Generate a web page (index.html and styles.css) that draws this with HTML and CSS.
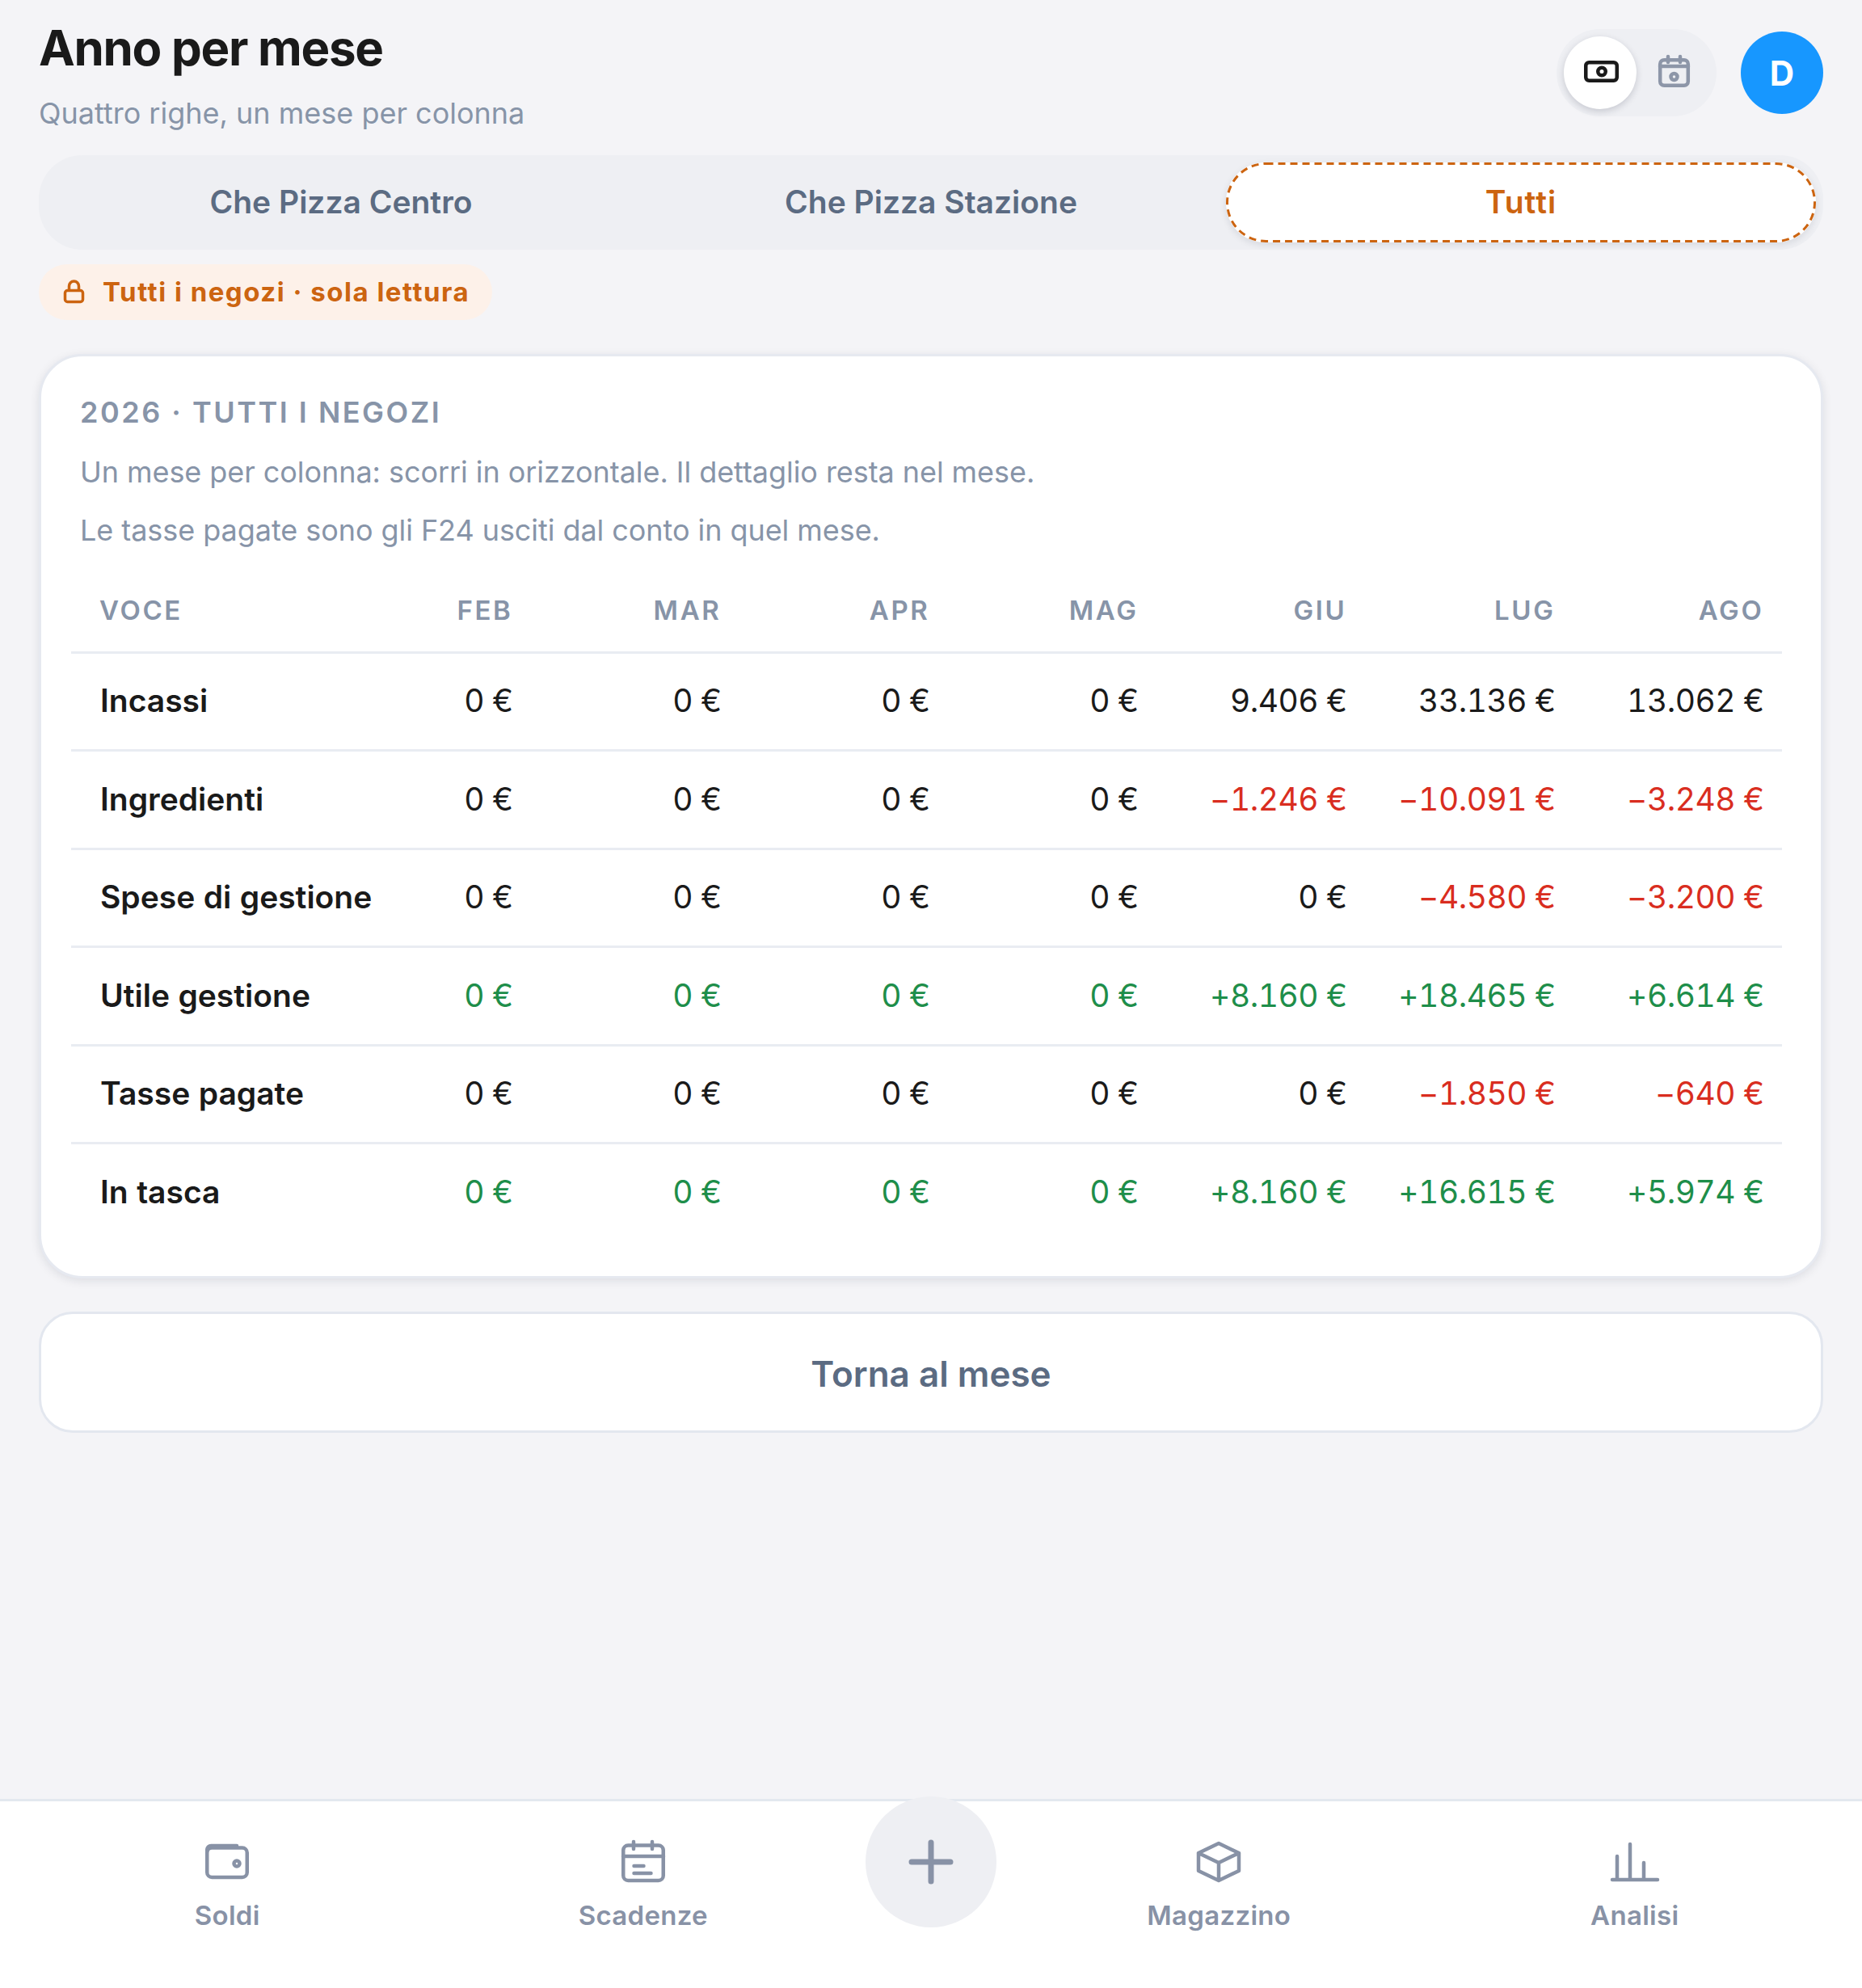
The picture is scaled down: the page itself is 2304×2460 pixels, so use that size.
FILE: index.html
```html
<!DOCTYPE html>
<html lang="it">
<head>
  <meta charset="UTF-8">
  <meta name="viewport" content="width=device-width, initial-scale=1.0">
  <title>Anno per mese</title>
  <link rel="stylesheet" href="styles.css">
</head>
<body>
  <div class="page">
    <main class="main">
      <header class="top">
        <div class="top-text">
          <h1 class="title">Anno per mese</h1>
          <p class="subtitle">Quattro righe, un mese per colonna</p>
        </div>
        <div class="top-right">
          <div class="toggle">
            <div class="toggle-btn active">
              <svg class="icon-top" viewBox="0 0 60 60" fill="none" stroke="currentColor" stroke-width="4.500">
                <rect x="12.250" y="17.250" width="38.500" height="22.500" rx="4"/>
                <circle cx="32" cy="28.500" r="4.750"/>
              </svg>
            </div>
            <div class="toggle-btn">
              <svg class="icon-top" viewBox="0 0 60 60" fill="none" stroke="currentColor" stroke-width="4.500" stroke-linecap="round">
                <rect x="14.200" y="14.200" width="34.600" height="31.600" rx="5"/>
                <path d="M24 10v7M39 10v7M14 22h35"/>
                <circle cx="31.500" cy="35" r="4"/>
              </svg>
            </div>
          </div>
          <div class="avatar">D</div>
        </div>
      </header>

      <nav class="tabs">
        <div class="tab">Che Pizza Centro</div>
        <div class="tab">Che Pizza Stazione</div>
        <div class="tab selected">
          <svg class="tab-dash" viewBox="0 0 730 99" fill="none">
            <rect x="1.500" y="1.500" width="727" height="96" rx="48" stroke="currentColor" stroke-width="3" stroke-dasharray="9 6"/>
          </svg>
          Tutti
        </div>
      </nav>

      <div class="badge">
        <svg class="icon-lock" viewBox="0 0 42 42" fill="none" stroke="currentColor" stroke-width="3.500" stroke-linecap="round">
          <rect x="10.500" y="19.500" width="22" height="14" rx="3"/>
          <path d="M15.500 19v-5a6 6 0 0 1 12 0v5"/>
        </svg>
        Tutti i negozi · sola lettura
      </div>

      <section class="card">
        <h2 class="card-title">2026 · TUTTI I NEGOZI</h2>
        <p class="card-note">Un mese per colonna: scorri in orizzontale. Il dettaglio resta nel mese.</p>
        <p class="card-note second">Le tasse pagate sono gli F24 usciti dal conto in quel mese.</p>

        <table class="year">
          <colgroup>
            <col class="col-name">
            <col class="col-first">
            <col class="col-month">
            <col class="col-month">
            <col class="col-month">
            <col class="col-month">
            <col class="col-month">
            <col class="col-month">
          </colgroup>
          <thead>
            <tr>
              <th>VOCE</th><th>FEB</th><th>MAR</th><th>APR</th><th>MAG</th><th>GIU</th><th>LUG</th><th>AGO</th>
            </tr>
          </thead>
          <tbody>
            <tr>
              <td>Incassi</td><td>0 €</td><td>0 €</td><td>0 €</td><td>0 €</td><td>9.406 €</td><td>33.136 €</td><td>13.062 €</td>
            </tr>
            <tr>
              <td>Ingredienti</td><td>0 €</td><td>0 €</td><td>0 €</td><td>0 €</td><td class="neg">−1.246 €</td><td class="neg">−10.091 €</td><td class="neg">−3.248 €</td>
            </tr>
            <tr>
              <td>Spese di gestione</td><td>0 €</td><td>0 €</td><td>0 €</td><td>0 €</td><td>0 €</td><td class="neg">−4.580 €</td><td class="neg">−3.200 €</td>
            </tr>
            <tr>
              <td>Utile gestione</td><td class="pos">0 €</td><td class="pos">0 €</td><td class="pos">0 €</td><td class="pos">0 €</td><td class="pos">+8.160 €</td><td class="pos">+18.465 €</td><td class="pos">+6.614 €</td>
            </tr>
            <tr>
              <td>Tasse pagate</td><td>0 €</td><td>0 €</td><td>0 €</td><td>0 €</td><td>0 €</td><td class="neg">−1.850 €</td><td class="neg">−640 €</td>
            </tr>
            <tr>
              <td>In tasca</td><td class="pos">0 €</td><td class="pos">0 €</td><td class="pos">0 €</td><td class="pos">0 €</td><td class="pos">+8.160 €</td><td class="pos">+16.615 €</td><td class="pos">+5.974 €</td>
            </tr>
          </tbody>
        </table>
      </section>

      <button class="back">Torna al mese</button>
    </main>

    <footer class="bottom">
      <div class="bottom-item">
        <svg class="icon-nav" viewBox="0 0 72 72" fill="none" stroke="currentColor" stroke-width="4.500" stroke-linecap="round" stroke-linejoin="round">
          <rect x="11.250" y="18.500" width="49.500" height="36.500" rx="6"/>
          <path d="M11.250 23v-2a5 5 0 0 1 5-5H48"/>
          <circle cx="48" cy="38" r="3.500"/>
        </svg>
        <span>Soldi</span>
      </div>
      <div class="bottom-item">
        <svg class="icon-nav" viewBox="0 0 72 72" fill="none" stroke="currentColor" stroke-width="4.500" stroke-linecap="round" stroke-linejoin="round">
          <rect x="11.250" y="15.500" width="49.500" height="43.500" rx="6"/>
          <path d="M24 11v9M47 11v9M11 29h50M24.500 41h12M24.500 50h21"/>
        </svg>
        <span>Scadenze</span>
      </div>
      <div class="bottom-add">
        <svg class="icon-nav" viewBox="0 0 72 72" fill="none" stroke="currentColor" stroke-width="7" stroke-linecap="round">
          <path d="M36 12v48M12 36h48"/>
        </svg>
      </div>
      <div class="bottom-item">
        <svg class="icon-nav" viewBox="0 0 72 72" fill="none" stroke="currentColor" stroke-width="4.500" stroke-linecap="round" stroke-linejoin="round">
          <path d="M36 13 61 25v22L36 59 11 47V25ZM11 25l25 12 25-12M36 37v22"/>
        </svg>
        <span>Magazzino</span>
      </div>
      <div class="bottom-item">
        <svg class="icon-nav" viewBox="0 0 72 72" fill="none" stroke="currentColor" stroke-width="4.500" stroke-linecap="round" stroke-linejoin="round">
          <path d="M8 58h56M14 58V29M30 58V14M47 58V37"/>
        </svg>
        <span>Analisi</span>
      </div>
    </footer>
  </div>
</body>
</html>
```

FILE: styles.css
```css
* {
  box-sizing: border-box;
}

body {
  margin: 0;
  background-color: #f4f4f7;
  color: #1a1a1a;
  font-family: Inter, "Noto Sans", sans-serif;
}

.page {
  display: flex;
  flex-direction: column;
  height: 2460px;
}

.main {
  flex: 1;
  padding: 23px 48px 0;
}

/* header */
.top {
  display: flex;
  justify-content: space-between;
  align-items: flex-start;
}

.title {
  margin: 0;
  font-size: 60px;
  line-height: 72px;
  font-weight: 700;
  letter-spacing: -1.3px;
}

.subtitle {
  margin: 20px 0 0;
  font-size: 36px;
  line-height: 51px;
  color: #8794a8;
}

.top-right {
  display: flex;
  align-items: center;
  gap: 30px;
  margin-top: 13px;
}

.toggle {
  display: flex;
  width: 198px;
  height: 108px;
  padding: 9px;
  border-radius: 54px;
  background-color: #eeeff3;
}

.toggle-btn {
  display: flex;
  justify-content: center;
  align-items: center;
  width: 90px;
  height: 90px;
  border-radius: 50%;
  color: #8d96a8;
}

.toggle-btn.active {
  background-color: #fff;
  color: #1a1a1a;
  box-shadow: 0 3px 9px rgba(20, 30, 50, .18);
}

.icon-top {
  width: 60px;
  height: 60px;
}

.avatar {
  display: flex;
  justify-content: center;
  align-items: center;
  width: 102px;
  height: 102px;
  border-radius: 50%;
  background-color: #1797ff;
  color: #fff;
  font-size: 42px;
  font-weight: 700;
}

/* shop tabs */
.tabs {
  display: grid;
  grid-template-columns: repeat(3, 1fr);
  height: 117px;
  margin-top: 26px;
  padding: 9px;
  border-radius: 54px;
  background-color: #eeeff3;
}

.tab {
  display: flex;
  justify-content: center;
  align-items: center;
  padding-bottom: 2px;
  font-size: 39px;
  font-weight: 600;
  color: #5b6b82;
}

.tab.selected {
  position: relative;
  border-radius: 48px;
  background-color: #fff;
  color: #cc6410;
  letter-spacing: 1px;
  box-shadow: 0 3px 9px rgba(20, 30, 50, .1);
}

.tab-dash {
  position: absolute;
  top: 0;
  left: 0;
  width: 100%;
  height: 100%;
}

.badge {
  display: inline-flex;
  align-items: center;
  gap: 15px;
  height: 69px;
  margin-top: 18px;
  padding: 0 28px 2px 22px;
  border-radius: 35px;
  background-color: #fdf1e9;
  color: #cc6410;
  font-size: 33px;
  font-weight: 700;
  letter-spacing: 1.5px;
  vertical-align: top;
}

.icon-lock {
  width: 42px;
  height: 42px;
}

/* year card */
.card {
  display: block;
  height: 1144px;
  margin-top: 42px;
  padding: 47px 48px 48px;
  border: 3px solid #e6e9f0;
  border-radius: 54px;
  background-color: #fff;
  box-shadow: 0 3px 12px rgba(20, 30, 50, .1);
}

.card-title {
  margin: 0;
  font-size: 36px;
  line-height: 45px;
  font-weight: 600;
  letter-spacing: 2.52px;
  color: #8794a8;
}

.card-note {
  margin: 24px 0 0;
  font-size: 36px;
  line-height: 54px;
  letter-spacing: -0.06px;
  color: #8794a8;
}

.card-note.second {
  margin-top: 18px;
}

.year {
  width: 2117px;
  margin: 22px 0 0 -11px;
  border-collapse: separate;
  border-spacing: 0;
  table-layout: fixed;
  font-variant-numeric: tabular-nums;
}

.col-name {
  width: 400px;
}

.col-first {
  width: 169px;
}

.col-month {
  width: 258px;
}

.year th {
  height: 103.5px;
  padding: 0 22.5px 0 0;
  border-bottom: 3px solid #e9ecf2;
  text-align: right;
  font-size: 33px;
  font-weight: 600;
  letter-spacing: 2.64px;
  color: #8794a8;
}

.year td {
  height: 121.5px;
  padding: 0 22.5px 2px 0;
  border-bottom: 3px solid #e9ecf2;
  text-align: right;
  font-size: 39px;
  letter-spacing: -0.5px;
  white-space: nowrap;
}

.year tbody tr:last-child td {
  border-bottom-color: transparent;
}

.year th:first-child {
  padding-left: 35px;
  text-align: left;
}

.year td:first-child {
  padding-left: 36px;
  text-align: left;
  font-weight: 600;
  letter-spacing: 0;
}

.neg {
  color: #d92d20;
}

.pos {
  color: #1e8e4a;
}

.back {
  display: block;
  width: 100%;
  height: 150px;
  margin-top: 41px;
  padding-top: 4px;
  border: 3px solid #e3e7ef;
  border-radius: 42px;
  background-color: #fff;
  color: #5b6b82;
  font-family: inherit;
  font-size: 44px;
  font-weight: 600;
}

/* bottom nav */
.bottom {
  display: grid;
  grid-template-columns: 1fr 1fr 198px 1fr 1fr;
  height: 234px;
  padding: 0 24px;
  border-top: 3px solid #e3e8ef;
  background-color: #fff;
}

.bottom-item {
  display: flex;
  flex-direction: column;
  align-items: center;
  gap: 8px;
  padding-top: 39px;
  color: #8892a6;
  font-size: 33px;
  line-height: 45px;
  font-weight: 600;
  letter-spacing: 0.3px;
}

.icon-nav {
  width: 72px;
  height: 72px;
}

.bottom-add {
  display: flex;
  justify-content: center;
  align-items: center;
  justify-self: center;
  width: 162px;
  height: 162px;
  margin-top: -6px;
  border-radius: 50%;
  background-color: #eeeff3;
  color: #8892a6;
}
```
